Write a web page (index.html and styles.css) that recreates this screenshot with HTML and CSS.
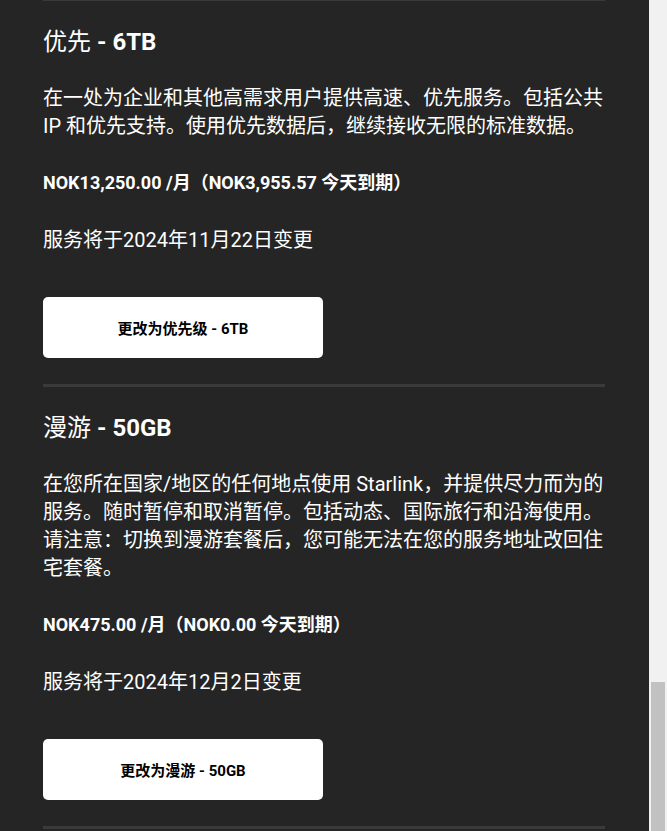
FILE: index.html
```html
<!DOCTYPE html>
<html>

<head>
    <meta charset="utf-8">
    <meta name="viewport" content="width=device-width, initial-scale=1.0">
    <title>套餐</title>
    <link rel="stylesheet" href="styles.css">
</head>

<body>
    <div class="page">
        <div class="plan">
            <h2 class="plan-title"><span class="cjk">优先</span> - 6TB</h2>
            <p class="plan-desc">在一处为企业和其他高需求用户提供高速、优先服务。包括公共 IP 和优先支持。使用优先数据后，继续接收无限的标准数据。</p>
            <p class="plan-price">NOK13,250.00 /月（NOK3,955.57 今天到期）</p>
            <p class="plan-date">服务将于2024年11月22日变更</p>
            <button class="plan-button">更改为优先级 - 6TB</button>
        </div>
        <div class="plan">
            <h2 class="plan-title"><span class="cjk">漫游</span> - 50GB</h2>
            <p class="plan-desc">在您所在国家/地区的任何地点使用 Starlink，并提供尽力而为的服务。随时暂停和取消暂停。包括动态、国际旅行和沿海使用。请注意：切换到漫游套餐后，您可能无法在您的服务地址改回住宅套餐。</p>
            <p class="plan-price">NOK475.00 /月（NOK0.00 今天到期）</p>
            <p class="plan-date">服务将于2024年12月2日变更</p>
            <button class="plan-button">更改为漫游 - 50GB</button>
        </div>
        <div class="plan"></div>
    </div>
    <div class="scrollbar">
        <div class="thumb"></div>
    </div>
</body>

</html>
```

FILE: styles.css
```css
html, body {
    font-family: Roboto, "Noto Sans CJK SC", sans-serif;
    background: #252525;
    color: #ffffff;
}

body {
    margin: 0;
    padding: 0;
    height: 831px;
    display: flex;
    overflow: hidden;
}

.page {
    flex: 1;
    padding-left: 43px;
    margin-top: -2px;
    overflow: hidden;
}

.plan {
    width: 562px;
    border-top: 3px solid #3a3a3a;
    padding: 25px 0 26px 0;
    display: flex;
    flex-direction: column;
    align-items: flex-start;
}

.plan-title {
    margin: 0;
    font-size: 24px;
    line-height: 32px;
    font-weight: 700;
}

.plan-title .cjk {
    font-weight: 400;
}

.plan-desc {
    margin: 26px 0 0 0;
    width: 575px;
    font-size: 20px;
    line-height: 28px;
}

.plan-price {
    margin: 31px 0 0 0;
    font-size: 18px;
    line-height: 24px;
    font-weight: 700;
}

.plan-date {
    margin: 31px 0 0 0;
    font-size: 20px;
    line-height: 28px;
}

.plan-button {
    margin-top: 43px;
    width: 280px;
    height: 61px;
    background: #ffffff;
    border: none;
    border-radius: 5px;
    color: #000000;
    font-family: Roboto, "Noto Sans CJK SC", sans-serif;
    font-size: 15px;
    font-weight: 700;
    cursor: pointer;
}

.scrollbar {
    width: 18px;
    background: #f1f1f1;
    display: flex;
    flex-direction: column;
    justify-content: flex-end;
}

.thumb {
    height: 149px;
    margin: 0 2px;
    background: #c1c1c1;
}
```
